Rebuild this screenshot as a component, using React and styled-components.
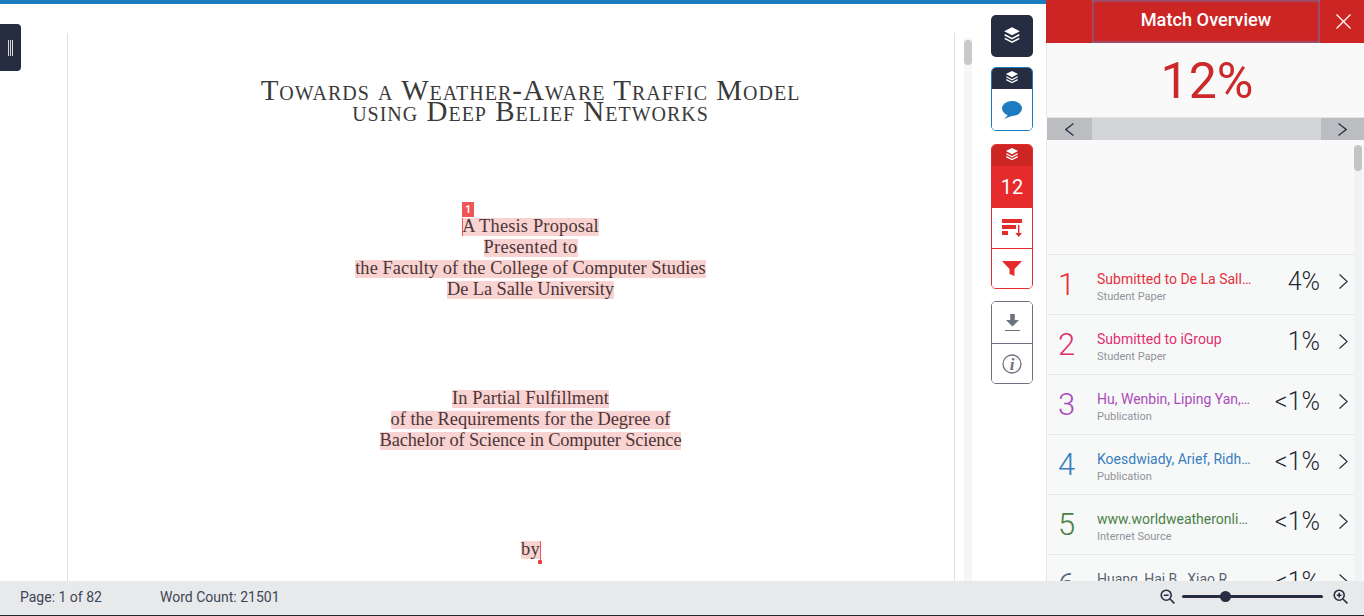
import React from "react";
import styled, { createGlobalStyle } from "styled-components";

const GlobalStyle = createGlobalStyle`
  html, body {
    margin: 0;
    padding: 0;
    overflow: hidden;
    background: #fff;
  }
  * {
    box-sizing: border-box;
  }
`;

const Screen = styled.div`
  display: flex;
  flex-direction: column;
  width: 1364px;
  height: 616px;
  overflow: hidden;
  font-family: Roboto, "Liberation Sans", sans-serif;
  border-bottom: 1px solid #23262c;
`;
const Workspace = styled.div`
  display: flex;
  height: 581px;
  overflow: hidden;
`;
const Viewer = styled.div`
  position: relative;
  display: flex;
  flex: 1;
  border-top: 4px solid #1c7cbf;
  padding-left: 67px;
  min-width: 0;
`;
const DrawerTab = styled.div`
  position: absolute;
  left: 0;
  top: 20px;
  display: flex;
  align-items: center;
  justify-content: center;
  gap: 1px;
  width: 21px;
  height: 47px;
  background: #262d40;
  border-radius: 0 4px 4px 0;
`;
const DrawerLine = styled.span`
  width: 1px;
  height: 16px;
  background: #d6d8dd;
`;
const Page = styled.div`
  display: flex;
  flex-direction: column;
  align-items: center;
  width: 888px;
  margin-top: 29px;
  padding: 47px 0 0 39px;
  border-left: 1px solid #e0e0e0;
  border-right: 1px solid #e0e0e0;
  font-family: "Liberation Serif", "Times New Roman", serif;
  color: #333;
`;
const Title = styled.h1`
  margin: 0 0 96px;
  font-weight: 400;
  font-size: 29px;
  line-height: 21px;
  font-variant: small-caps;
  letter-spacing: 1px;
  text-align: center;
  white-space: nowrap;
  color: #3a3a3a;
`;
const Block = styled.div`
  display: flex;
  flex-direction: column;
  align-items: center;
  margin-bottom: ${(p) => p.$gap}px;
`;
const MatchLine = styled.div`
  position: relative;
  height: 18px;
  margin-bottom: 3px;
  font-size: 18.4px;
  line-height: 16px;
  letter-spacing: ${(p) => p.$spacing ?? 0.3}px;
  white-space: nowrap;
  background: #f9d2d2;
  color: #4b3636;
`;
const MatchFlag = styled.span`
  position: absolute;
  left: 0;
  top: -16px;
  width: 12px;
  height: 15px;
  background: #ee5555;
  color: #fff;
  font: 700 10px/15px Roboto, sans-serif;
  letter-spacing: 0;
  text-align: center;
`;
const FlagStem = styled.span`
  position: absolute;
  left: 0;
  top: 0;
  width: 1px;
  height: 18px;
  background: #ee5555;
`;
const EndStem = styled.span`
  position: absolute;
  right: -1px;
  top: 0;
  width: 1px;
  height: 19px;
  background: #ee5555;
`;
const EndDot = styled.span`
  position: absolute;
  right: -2px;
  top: 19px;
  width: 4px;
  height: 4px;
  border-radius: 1px;
  background: #ee3b3b;
`;
const ScrollTrack = styled.div`
  width: 8px;
  margin: 34px 0 0 9px;
  padding-top: 2px;
  background: #f5f6f6;
`;
const ScrollThumb = styled.div`
  width: 8px;
  height: 25px;
  border-radius: 4px;
  background: #c9c9c9;
`;
const Rail = styled.div`
  display: flex;
  flex-direction: column;
  align-items: center;
  width: 42px;
  margin: 11px 0 0 19px;
`;
const Cluster = styled.div`
  display: flex;
  flex-direction: column;
  width: 42px;
  margin-top: ${(p) => p.$top || 0}px;
  border: 1px solid ${(p) => p.$color};
  border-radius: 5px;
  overflow: hidden;
  background: #fff;
`;
const LayersButton = styled.div`
  display: flex;
  align-items: center;
  justify-content: center;
  width: 42px;
  height: 42px;
  padding-bottom: 2px;
  border-radius: 5px;
  background: #262d40;
`;
const ClusterHead = styled.div`
  display: flex;
  align-items: center;
  justify-content: center;
  height: 21px;
  padding-bottom: 3px;
  background: ${(p) => p.$bg};
`;
const ClusterCell = styled.div`
  display: flex;
  align-items: center;
  justify-content: center;
  height: ${(p) => p.$height}px;
  background: ${(p) => p.$bg || "#fff"};
  color: ${(p) => p.$color || "inherit"};
  font-size: 20px;
  border-top: ${(p) => (p.$line ? `1px solid ${p.$line}` : "0")};
`;
const Panel = styled.aside`
  display: flex;
  flex-direction: column;
  width: 318px;
  flex: none;
  background: #f9f9f9;
  overflow: hidden;
`;
const PanelHeader = styled.header`
  display: flex;
  height: 43px;
  background: #cc2524;
`;
const HeaderSpacer = styled.div`
  width: 46px;
`;
const HeaderTitle = styled.div`
  display: flex;
  align-items: center;
  justify-content: center;
  width: 228px;
  background: #cc2524;
  box-shadow: inset 0 0 3px 1px #7d6a9c;
  color: #fff;
  font-size: 18.2px;
  font-weight: 500;
  padding-bottom: 5px;
`;
const CloseButton = styled.div`
  display: flex;
  align-items: center;
  justify-content: center;
  flex: 1;
  padding-left: 2px;
  color: #fff;
`;
const Score = styled.div`
  height: 74px;
  padding-left: 3px;
  border-left: 1px solid #e6e8ea;
  text-align: center;
  font-size: 50px;
  line-height: 76px;
  color: #cc2a2a;
`;
const Pager = styled.div`
  display: flex;
  justify-content: space-between;
  height: 23px;
  margin-left: 1px;
  background: #d3d4d8;
  border-top: 1px solid #e3e3e5;
`;
const PagerButton = styled.div`
  display: flex;
  align-items: center;
  justify-content: center;
  width: ${(p) => p.$width}px;
  background: #bcbdc1;
  color: #262d40;
`;
const MatchArea = styled.div`
  position: relative;
  flex: 1;
  min-height: 0;
  padding: 114px 10px 0 0;
  border-left: 1px solid #e6e8ea;
  background: #f9f9f9;
`;
const SideThumb = styled.div`
  position: absolute;
  right: 2px;
  top: 5px;
  width: 8px;
  height: 26px;
  border-radius: 4px;
  background: #c4c4c4;
`;
const SideTrack = styled.div`
  position: absolute;
  right: 2px;
  top: 26px;
  bottom: 0;
  width: 8px;
  background: #f1f2f3;
`;
const MatchRow = styled.div`
  display: grid;
  grid-template-columns: 50px 155px 68px 1fr;
  align-items: center;
  height: 60px;
  border-top: 1px solid #e6e8ea;
  background: #f7f9f9;
`;
const RowIndex = styled.div`
  padding-left: 11px;
  font-size: 31px;
  color: ${(p) => p.$color};
  font-weight: 300;
`;
const RowText = styled.div`
  min-width: 0;
  padding-top: 6px;
`;
const RowTitle = styled.div`
  font-size: 14px;
  line-height: 17px;
  white-space: nowrap;
  overflow: hidden;
  text-overflow: ellipsis;
  color: ${(p) => p.$color};
`;
const RowSource = styled.div`
  font-size: 11px;
  line-height: 17px;
  color: #8f939b;
`;
const RowPercent = styled.div`
  text-align: right;
  font-size: 25px;
  font-weight: 300;
  color: #1f2630;
  white-space: nowrap;
  padding-bottom: 6px;
`;
const RowArrow = styled.div`
  display: flex;
  justify-content: flex-end;
  padding: 0 6px 6px 0;
  color: #262d40;
`;
const StatusBar = styled.footer`
  display: flex;
  align-items: center;
  height: 34px;
  flex: none;
  background: #e8e9eb;
  color: #3d4657;
  font-size: 14px;
  padding-left: 20px;
`;
const StatusItem = styled.span`
  width: 140px;
  padding-bottom: 3px;
`;
const ZoomControls = styled.div`
  display: flex;
  align-items: center;
  gap: 7px;
  margin-left: auto;
  padding: 0 16px 3px 0;
  color: #262d40;
`;
const ZoomSlider = styled.div`
  position: relative;
  width: 141px;
  height: 3px;
  margin-right: 3px;
  border-radius: 2px;
  background: #262d40;
`;
const ZoomKnob = styled.span`
  position: absolute;
  left: 38px;
  top: -4px;
  width: 11px;
  height: 11px;
  border-radius: 50%;
  background: #262d40;
`;

const LayersIcon = ({ size }) => (
  <svg width={size} height={size} viewBox="0 0 16 16">
    <path d="M8 1 15 4.600 8 8.200 1 4.600Z" fill="#fff" />
    <path d="M1.500 7.800 8 11.200 14.500 7.800" fill="none" stroke="#fff" strokeWidth="1.400" />
    <path d="M1.500 11 8 14.400 14.500 11" fill="none" stroke="#fff" strokeWidth="1.400" />
  </svg>
);

const Chevron = ({ dir, w, h }) => (
  <svg width={w} height={h} viewBox={`0 0 ${w} ${h}`} fill="none" stroke="currentColor" strokeWidth="1.2">
    <path
      d={
        dir === "left"
          ? `M${w - 0.5} 0.500 0.800 ${h / 2} ${w - 0.5} ${h - 0.5}`
          : `M0.500 0.500 ${w - 0.8} ${h / 2} 0.500 ${h - 0.5}`
      }
    />
  </svg>
);

const ZoomIcon = ({ plus }) => (
  <svg width="15" height="15" viewBox="0 0 15 15" fill="none" stroke="currentColor" strokeWidth="1.600">
    <circle cx="6.200" cy="6.200" r="5" />
    <path d="M10 10l4.400 4.400M3.800 6.200h4.800" />
    {plus && <path d="M6.200 3.800v4.800" />}
  </svg>
);

const matches = [
  { n: 1, color: "#e5303a", title: "Submitted to De La Salle University", source: "Student Paper", pct: "4%" },
  { n: 2, color: "#df2f6f", title: "Submitted to iGroup", source: "Student Paper", pct: "1%" },
  { n: 3, color: "#aa4cb8", title: "Hu, Wenbin, Liping Yan, Xianghua", source: "Publication", pct: "<1%" },
  { n: 4, color: "#3a7dbd", title: "Koesdwiady, Arief, Ridha Soua", source: "Publication", pct: "<1%" },
  { n: 5, color: "#4a8048", title: "www.worldweatheronline.com", source: "Internet Source", pct: "<1%" },
  { n: 6, color: "#5a6472", title: "Huang, Hai B., Xiao R.", source: "Publication", pct: "<1%" },
];

const App = () => {
  return (
    <Screen>
      <GlobalStyle />
      <Workspace>
        <Viewer>
          <DrawerTab>
            <DrawerLine />
            <DrawerLine />
            <DrawerLine />
          </DrawerTab>
          <Page>
            <Title>
              Towards a Weather-Aware Traffic Model
              <br />
              using Deep Belief Networks
            </Title>
            <Block $gap={88}>
              <MatchLine $spacing={0.18}>
                <MatchFlag>1</MatchFlag>
                <FlagStem />
                A Thesis Proposal
              </MatchLine>
              <MatchLine>Presented to</MatchLine>
              <MatchLine $spacing={0.06}>the Faculty of the College of Computer Studies</MatchLine>
              <MatchLine $spacing={-0.1}>De La Salle University</MatchLine>
            </Block>
            <Block $gap={88}>
              <MatchLine $spacing={0.07}>In Partial Fulfillment</MatchLine>
              <MatchLine $spacing={0}>of the Requirements for the Degree of</MatchLine>
              <MatchLine $spacing={-0.13}>Bachelor of Science in Computer Science</MatchLine>
            </Block>
            <Block $gap={0}>
              <MatchLine>
                by
                <EndStem />
                <EndDot />
              </MatchLine>
            </Block>
          </Page>
          <ScrollTrack>
            <ScrollThumb />
          </ScrollTrack>
          <Rail>
            <LayersButton>
              <LayersIcon size={18} />
            </LayersButton>
            <Cluster $color="#1c7cbf" $top={10}>
              <ClusterHead $bg="#262d40">
                <LayersIcon size={14} />
              </ClusterHead>
              <ClusterCell $height={41}>
                <svg width="22" height="20" viewBox="0 0 22 20">
                  <ellipse cx="11" cy="8.500" rx="10" ry="7.500" fill="#1c7cbf" />
                  <path d="M8 14 3 19l9-3.500Z" fill="#1c7cbf" />
                </svg>
              </ClusterCell>
            </Cluster>
            <Cluster $color="#e52b2b" $top={13}>
              <ClusterHead $bg="#cc2524">
                <LayersIcon size={14} />
              </ClusterHead>
              <ClusterCell $height={41} $bg="#e52b2b" $color="#fff">12</ClusterCell>
              <ClusterCell $height={41} $line="#e52b2b">
                <svg width="22" height="18" viewBox="0 0 22 18" fill="#e52b2b">
                  <rect x="1" y="0" width="20" height="4" />
                  <rect x="1" y="6" width="14" height="4" />
                  <rect x="1" y="12" width="6" height="4" />
                  <path d="M17 6h1.400v8H21l-3.300 4-3.300-4H17Z" />
                </svg>
              </ClusterCell>
              <ClusterCell $height={40} $line="#e52b2b">
                <svg width="22" height="17" viewBox="0 0 22 17">
                  <path d="M1 1h20l-7.500 8V16L8.500 14V9Z" fill="#e52b2b" />
                </svg>
              </ClusterCell>
            </Cluster>
            <Cluster $color="#6d7280" $top={12}>
              <ClusterCell $height={41}>
                <svg width="15" height="18" viewBox="0 0 15 18">
                  <path d="M5.200 0h4.600v6H14L7.500 12.500 1 6h4.200Z" fill="#6d7280" />
                  <rect x="0" y="16" width="15" height="1" fill="#6d7280" />
                </svg>
              </ClusterCell>
              <ClusterCell $height={40} $line="#6d7280">
                <svg width="20" height="20" viewBox="0 0 20 20">
                  <circle cx="10" cy="10" r="9" fill="none" stroke="#6d7280" strokeWidth="1.300" />
                  <text x="10" y="15.500" textAnchor="middle" fontFamily="Liberation Serif" fontStyle="italic" fontWeight="700" fontSize="17" fill="#6d7280">i</text>
                </svg>
              </ClusterCell>
            </Cluster>
          </Rail>
        </Viewer>
        <Panel>
          <PanelHeader>
            <HeaderSpacer />
            <HeaderTitle>Match Overview</HeaderTitle>
            <CloseButton>
              <svg width="15" height="15" viewBox="0 0 15 15" stroke="currentColor" strokeWidth="1.300">
                <path d="M.5.5l14 14M14.500.5l-14 14" />
              </svg>
            </CloseButton>
          </PanelHeader>
          <Score>12%</Score>
          <Pager>
            <PagerButton $width={45}>
              <Chevron dir="left" w={9} h={13} />
            </PagerButton>
            <PagerButton $width={43}>
              <Chevron dir="right" w={9} h={13} />
            </PagerButton>
          </Pager>
          <MatchArea>
            <SideTrack />
            <SideThumb />
            {matches.map((m) => (
              <MatchRow key={m.n}>
                <RowIndex $color={m.color}>{m.n}</RowIndex>
                <RowText>
                  <RowTitle $color={m.color}>{m.title}</RowTitle>
                  <RowSource>{m.source}</RowSource>
                </RowText>
                <RowPercent>{m.pct}</RowPercent>
                <RowArrow>
                  <Chevron dir="right" w={9} h={15} />
                </RowArrow>
              </MatchRow>
            ))}
          </MatchArea>
        </Panel>
      </Workspace>
      <StatusBar>
        <StatusItem>Page: 1 of 82</StatusItem>
        <StatusItem>Word Count: 21501</StatusItem>
        <ZoomControls>
          <ZoomIcon />
          <ZoomSlider>
            <ZoomKnob />
          </ZoomSlider>
          <ZoomIcon plus />
        </ZoomControls>
      </StatusBar>
    </Screen>
  );
};

export default App;
